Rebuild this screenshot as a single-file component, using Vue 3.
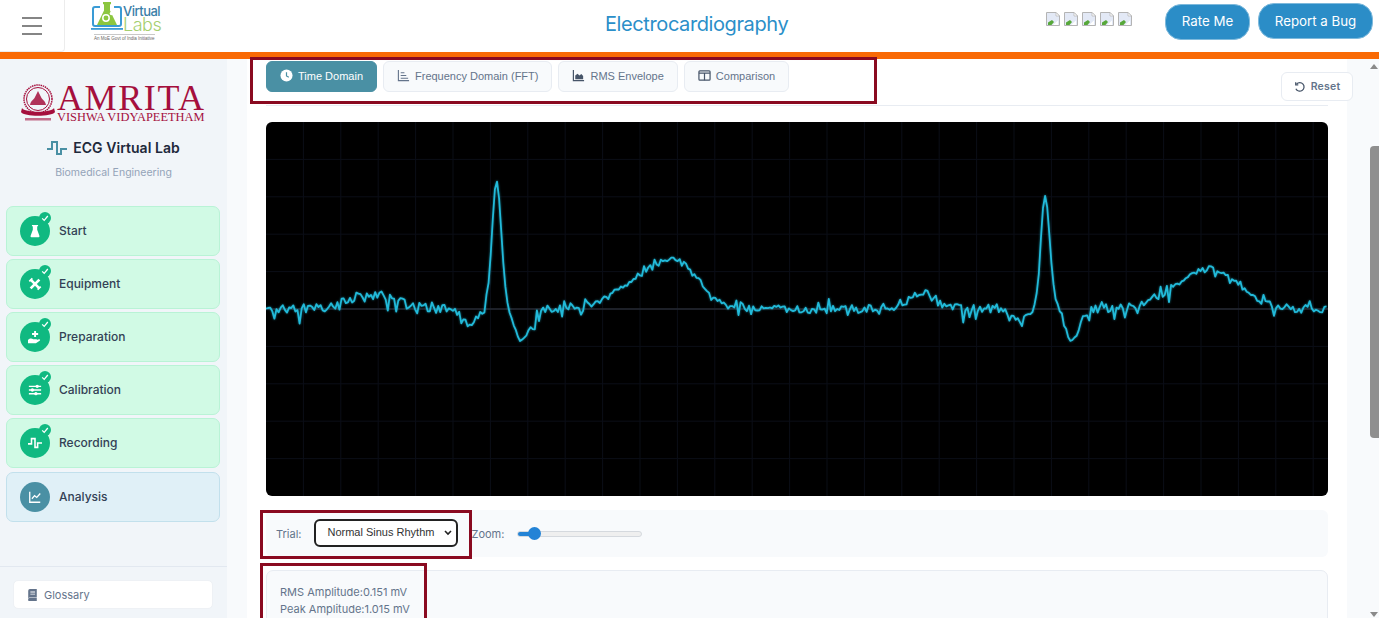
<script setup>
import { computed } from 'vue'

const steps = [
  { name: 'Start', icon: 'flask', done: true },
  { name: 'Equipment', icon: 'tools', done: true },
  { name: 'Preparation', icon: 'hand', done: true },
  { name: 'Calibration', icon: 'sliders', done: true },
  { name: 'Recording', icon: 'wave', done: true },
  { name: 'Analysis', icon: 'chart', done: false }
]
const tabs = [
  { name: 'Time Domain', icon: 'clock', active: true },
  { name: 'Frequency Domain (FFT)', icon: 'bars' },
  { name: 'RMS Envelope', icon: 'area' },
  { name: 'Comparison', icon: 'cols' }
]

const W = 1062
const H = 374
const MID = 187
const vGrid = Array.from({ length: 28 }, (_, i) => 37.4 * (i + 1))
const hGrid = Array.from({ length: 9 }, (_, i) => 37.4 * (i + 1))

function bump(x, c, a, wl, wr) {
  const w = x < c ? wl : (wr ?? wl)
  return a * Math.exp(-((x - c) ** 2) / (2 * w * w))
}
const trace = computed(() => {
  let seed = 20240611
  const rnd = () => {
    seed = (seed * 1664525 + 1013904223) % 4294967296
    return seed / 4294967296
  }
  const pts = []
  for (let px = 266; px <= 1328; px += 2.1) {
    let v = 0
    v += bump(px, 372, 15, 24)
    v += bump(px, 470, -15, 7)
    v += bump(px, 496.5, 128, 4.4, 4.8)
    v += bump(px, 521, -32, 6, 8)
    v += bump(px, 674, 50, 40, 24)
    v += bump(px, 922, 15, 16, 14)
    v += bump(px, 1020, -14, 9, 6)
    v += bump(px, 1045, 113, 4.2, 4.8)
    v += bump(px, 1071, -32, 5, 8)
    v += bump(px, 1212, 40, 36, 28)
    let n = (rnd() - 0.5) * 9
    if (rnd() < 0.24) n += (rnd() - 0.6) * 24
    const damp = bump(px, 496.5, 1, 8) + bump(px, 1045, 1, 8) + bump(px, 521, 0.75, 8) + bump(px, 1071, 0.75, 8)
    const calm = bump(px, 680, 0.6, 60) + bump(px, 1215, 0.4, 50)
    v += n * (1 - Math.min(1, damp)) * (1 - calm)
    pts.push(`${(px - 266).toFixed(1)},${(MID - v).toFixed(1)}`)
  }
  return pts.join(' ')
})
</script>

<template>
  <div class="page">
    <header class="top">
      <button class="menu" aria-label="Menu"><span></span><span></span><span></span></button>
      <div class="vl-logo">
        <svg class="vl-mark" viewBox="0 0 32 30" width="32" height="30">
          <path d="M9 6H4a2 2 0 0 0-2 2v15a2 2 0 0 0 2 2h24a2 2 0 0 0 2-2V8a2 2 0 0 0-2-2h-5" fill="none" stroke="#3a9bd5" stroke-width="2"/>
          <path d="M0 27h32v1.800H0z" fill="#3a9bd5"/>
          <path d="M12 1h8v2l-1 .5v6L26 24H6l7-14.500v-6L12 3z" fill="#8cc63f"/>
          <circle cx="15" cy="17" r="3.200" fill="none" stroke="#fff" stroke-width="1.500"/>
          <circle cx="20.500" cy="12.500" r="1.800" fill="#fff"/>
        </svg>
        <div class="vl-words"><span class="vl-a">Virtual</span><span class="vl-b">Labs</span></div>
        <div class="vl-tag">An MoE Govt of India Initiative</div>
      </div>
      <h1 class="title">Electrocardiography</h1>
      <div class="broken">
        <svg v-for="n in 5" :key="n" viewBox="0 0 14 14" width="14" height="14">
          <path d="M.5.5h9.500l3.500 3.500v9.500H.5z" fill="#e3e9f6" stroke="#b4b4b4"/>
          <path d="M2 13V10.500L6 8l2 2-2.500 3z" fill="#57a83a"/>
          <path d="M7 13l5-4.500V13z" fill="#fff"/>
          <path d="M10 .5l3.500 3.500H10z" fill="#fff" stroke="#b4b4b4" stroke-width=".7"/>
        </svg>
      </div>
      <button class="pill rate">Rate Me</button>
      <button class="pill bug">Report a Bug</button>
    </header>
    <div class="accent"></div>

    <div class="body">
      <aside class="side">
        <div class="brand">
          <div class="amrita">
            <svg class="emblem" viewBox="0 0 34 38" width="34" height="38">
              <circle cx="17" cy="15" r="14" fill="none" stroke="#a50f3d" stroke-width="1.500" stroke-dasharray="1.500 .7"/>
              <circle cx="17" cy="15" r="11.500" fill="none" stroke="#a50f3d" stroke-width="1"/>
              <path d="M9 21c1-5 4-5 5-8l3-6 3 6c1 3 4 3 5 8z" fill="#a50f3d" opacity=".85"/>
              <path d="M1 24c3 5 29 5 32 0l1 4c-3 5-31 5-34 0z" fill="#a50f3d"/>
              <rect x="4" y="34" width="26" height="2.500" fill="#a50f3d" opacity=".6"/>
            </svg>
            <div class="am-words">
              <div class="am-a">AMRITA</div>
              <div class="am-b">VISHWA VIDYAPEETHAM</div>
            </div>
          </div>
          <div class="lab">
            <svg viewBox="0 0 20 14" width="20" height="14" fill="none" stroke="#4a90a4" stroke-width="2">
              <path d="M0 8h5V1h5v12h4V8h6"/>
            </svg>
            <span>ECG Virtual Lab</span>
          </div>
          <div class="dept">Biomedical Engineering</div>
        </div>

        <nav class="steps">
          <div v-for="s in steps" :key="s.name" class="step" :class="{ done: s.done }">
            <div class="dot">
              <svg viewBox="0 0 16 16" width="14" height="14" fill="#fff" stroke="none">
                <path v-if="s.icon === 'flask'" d="M4.500 1h7v1.700h-1v3.800l2.500 7a1 1 0 0 1-1 1.500H4a1 1 0 0 1-1-1.500l2.500-7V2.700h-1z"/>
                <g v-if="s.icon === 'tools'" fill="none" stroke="#fff" stroke-width="3">
                  <path d="M3 13 13 3"/>
                  <path d="M3 3l10 10"/>
                  <path d="M1.500 5 5 1.500M11 14.500l3.500-3.500" stroke-width="2"/>
                </g>
                <g v-if="s.icon === 'hand'">
                  <path d="M7 1h2.200v2.400h2.400v2.200H9.200V8H7V5.600H4.600V3.400H7z"/>
                  <path d="M0 11.500c2-2 4-2 6-1h3.500c1.200 0 1.200 1.700 0 1.700H7l5.500-1.700c1.300-.3 1.900 1 .8 1.700L9 15H0z"/>
                </g>
                <g v-if="s.icon === 'sliders'">
                  <path d="M1 3h14v1.600H1zM1 7.200h14v1.600H1zM1 11.400h14V13H1z"/>
                  <circle cx="10.500" cy="3.800" r="1.900"/><circle cx="5" cy="8" r="1.900"/><circle cx="9" cy="12.200" r="1.900"/>
                </g>
                <path v-if="s.icon === 'wave'" d="M0 9h4V3h4v10h3V8h5" fill="none" stroke="#fff" stroke-width="1.800"/>
                <path v-if="s.icon === 'chart'" d="M2 2v12h12M4.500 10l3-3.500 2.500 2 4-4.500" fill="none" stroke="#fff" stroke-width="1.500"/>
              </svg>
              <span v-if="s.done" class="tick">
                <svg viewBox="0 0 10 10" width="8" height="8" fill="none" stroke="#fff" stroke-width="1.600"><path d="M1.500 5.500 4 8l4.500-5.500"/></svg>
              </span>
            </div>
            <span class="step-name">{{ s.name }}</span>
          </div>
        </nav>

        <div class="side-foot">
          <button class="gloss">
            <svg viewBox="0 0 12 14" width="11" height="12" fill="#64748b"><path d="M1 2a2 2 0 0 1 2-2h8v10H3a2 2 0 0 0-2 1zM1 12a1.500 1.500 0 0 1 1.500-1.500H11V14H2.500A1.500 1.500 0 0 1 1 12zM3.500 3v1H9V3zM3.500 5.500v1H9v-1z" fill-rule="evenodd"/></svg>
            Glossary
          </button>
        </div>
      </aside>

      <main class="main">
        <section class="panel">
          <div class="tabbar">
            <div class="tabs">
              <button v-for="t in tabs" :key="t.name" class="tab" :class="{ on: t.active }">
                <svg viewBox="0 0 14 14" width="13" height="13">
                  <g v-if="t.icon === 'clock'">
                    <circle cx="7" cy="7" r="6.500" fill="#fff"/>
                    <path d="M7 3.500V7.500L9.500 9" fill="none" stroke="#4a90a4" stroke-width="1.300"/>
                  </g>
                  <path v-if="t.icon === 'bars'" d="M1.500 1v11.500H13M4 4h4M4 7h6M4 10h8" fill="none" stroke="#64748b" stroke-width="1.200"/>
                  <g v-if="t.icon === 'area'">
                    <path d="M1.500 1v11.500H13" fill="none" stroke="#475569" stroke-width="1.300"/>
                    <path d="M3.500 11V7l2.500-2 2 2 2-1.500 2 2V11z" fill="#475569"/>
                  </g>
                  <g v-if="t.icon === 'cols'">
                    <rect x="1" y="2" width="12" height="10" rx="1" fill="none" stroke="#475569" stroke-width="1.300"/>
                    <path d="M1 4.500h12M7 4v8" stroke="#475569" stroke-width="1.300"/>
                  </g>
                </svg>
                {{ t.name }}
              </button>
            </div>
            <button class="reset">
              <svg viewBox="0 0 14 14" width="12" height="12" fill="none" stroke="#475569" stroke-width="1.500">
                <path d="M3 3.500A5 5 0 1 1 2.200 9"/><path d="M2 1.500v3h3" />
              </svg>
              Reset
            </button>
          </div>

          <div class="scope">
            <svg :viewBox="`0 0 ${W} ${H}`" :width="W" :height="H">
              <line v-for="x in vGrid" :key="'v' + x" :x1="x" :x2="x" y1="0" :y2="H" class="grid"/>
              <line v-for="y in hGrid" :key="'h' + y" x1="0" :x2="W" :y1="y" :y2="y" class="grid"/>
              <line x1="0" :x2="W" :y1="MID" :y2="MID" class="base"/>
              <polyline :points="trace" class="sig"/>
            </svg>
          </div>

          <div class="controls">
            <label class="ctl-label">Trial:</label>
            <select class="trial">
              <option>Normal Sinus Rhythm</option>
            </select>
            <label class="ctl-label">Zoom:</label>
            <input class="zoom" type="range" min="1" max="8" step="0.1" value="1.6" />
          </div>

          <div class="stats">
            <div>RMS Amplitude:0.151 mV</div>
            <div>Peak Amplitude:1.015 mV</div>
          </div>
        </section>

        <div class="scrollbar">
          <i class="up"></i>
          <div class="thumb"></div>
          <i class="down"></i>
        </div>
      </main>
    </div>

    <div class="mark m1"></div>
    <div class="mark m2"></div>
    <div class="mark m3"></div>
  </div>
</template>

<style>
html, body { margin: 0; overflow: hidden; background: #fff; }
</style>

<style scoped>
.page { position: relative; width: 1379px; height: 618px; overflow: hidden; font-family: Inter, "Liberation Sans", sans-serif; background: #fff; }
button { font-family: inherit; cursor: pointer; }

.top { height: 52px; display: flex; align-items: flex-start; background: #fff; }
.menu { width: 65px; height: 52px; padding: 0 22px; border: 0; border-right: 1px solid #ececec; border-bottom: 1px solid #ececec; border-radius: 0 0 4px 0; background: #fff; display: flex; flex-direction: column; justify-content: center; gap: 6px; }
.menu span { display: block; width: 20px; height: 2px; background: #858585; }

.vl-logo { position: relative; width: 70px; height: 42px; margin: 1px 0 0 26px; }
.vl-mark { display: block; }
.vl-words { position: absolute; left: 32px; top: 4px; height: 28px; display: flex; flex-direction: column; }
.vl-a { font-size: 13px; line-height: 12px; font-weight: 500; color: #3a7ea8; letter-spacing: -.5px; }
.vl-b { font-size: 18px; font-weight: 300; color: #a5cf70; line-height: 16px; letter-spacing: -.5px; }
.vl-tag { position: absolute; left: 3px; top: 33px; padding-top: 1px; border-top: 1px solid #c8c8c8; font: 4.500px/6px "Liberation Sans", sans-serif; color: #666; white-space: nowrap; }

.title { margin: 13px 0 0 444px; font-size: 20px; line-height: 22px; font-weight: 400; color: #2b8fc9; white-space: nowrap; letter-spacing: -.4px; }
.broken { display: flex; gap: 4px; margin: 12px 33px 0 auto; }
.pill { height: 36px; padding: 0 0 2px; color: #fff; background: #2b8dc7; border: 1px solid #7db9dc; border-radius: 16px; font-size: 13.300px; }
.rate { width: 85px; margin-top: 4px; }
.bug { width: 115px; margin: 3px 6px 0 8px; padding: 0; }

.accent { height: 7px; background: #f96a05; }

.body { display: flex; height: 559px; }
.side { width: 227px; flex: none; background: #f1f5f9; display: flex; flex-direction: column; }
.brand { height: 147px; box-sizing: border-box; padding-top: 26px; }
.amrita { display: flex; padding-left: 21px; gap: 2px; }
.emblem { margin-top: -1px; }
.am-words { width: 150px; }
.am-a { font: 36px/26px "Liberation Serif", serif; color: #a50f3d; letter-spacing: 1.600px; height: 26px; }
.am-b { font: 12.400px/12px "Liberation Serif", serif; color: #a50f3d; white-space: nowrap; }
.lab { display: flex; align-items: center; justify-content: center; gap: 6px; margin-top: 15px; font-size: 14px; line-height: 20px; font-weight: 600; color: #1e293b; letter-spacing: .05px; }
.dept { text-align: center; margin-top: 8px; font-size: 10.500px; line-height: 14px; color: #94a3b8; }

.steps { display: flex; flex-direction: column; gap: 3px; padding: 0 7px 0 6px; }
.step { height: 50px; box-sizing: border-box; display: flex; align-items: center; padding-left: 13px; gap: 9px; border: 1px solid #bfe9d8; border-radius: 7px; background: #e0f0f7; border-color: #c2e0ec; }
.step.done { background: #d1fae5; border-color: #b9f3d6; }
.dot { position: relative; width: 30px; height: 30px; border-radius: 50%; background: #4a90a4; display: flex; align-items: center; justify-content: center; }
.done .dot { background: #10b981; }
.tick { position: absolute; right: -1px; top: -4px; width: 12px; height: 12px; border-radius: 50%; background: #10b981; display: flex; align-items: center; justify-content: center; }
.step-name { font-size: 12px; line-height: 16px; font-weight: 500; color: #334155; }
.step:last-child { margin-top: 1px; }

.side-foot { margin-top: auto; height: 52px; box-sizing: border-box; border-top: 1px solid #e2e8f0; padding: 13px 14px 0 13px; }
.gloss { width: 100%; height: 29px; display: flex; align-items: center; gap: 6px; padding: 0 0 0 13px; background: #fff; border: 1px solid #eef1f5; border-radius: 5px; font-size: 11px; color: #64748b; }

.main { flex: 1; display: flex; background: #f8fafc; padding-left: 20px; min-width: 0; }
.panel { width: 1100px; flex: none; box-sizing: border-box; background: #fff; padding: 2px 19px 0; }
.tabbar { display: flex; justify-content: space-between; height: 44px; border-bottom: 1px solid #e8ecf2; box-sizing: content-box; }
.tabs { display: flex; gap: 6px; align-items: flex-start; }
.tab { height: 31px; padding: 0 13px 2px; display: flex; align-items: center; gap: 5px; border: 1px solid #e8ecf2; border-radius: 6px; background: #f8fafc; color: #64748b; font: 11px "Liberation Sans", sans-serif; white-space: nowrap; }
.tab.on { background: #4a90a4; border-color: #4a90a4; color: #fff; }
.reset { margin: 11px -25px 0 0; width: 72px; height: 29px; display: flex; align-items: center; justify-content: center; gap: 5px; padding: 0; background: #fff; border: 1px solid #e8ecf2; border-radius: 6px; color: #64748b; font-size: 10.500px; font-weight: 600; letter-spacing: .2px; }

.scope { margin-top: 16px; width: 1062px; height: 374px; background: #000; border-radius: 6px; overflow: hidden; }
.scope svg { display: block; }
.grid { stroke: #0b0e17; stroke-width: 1; }
.base { stroke: #262a33; stroke-width: 1.500; }
.sig { fill: none; stroke: #22bad9; stroke-width: 1.800; stroke-linejoin: round; filter: drop-shadow(0 0 1px rgba(34, 186, 217, .6)); }

.controls { margin-top: 14px; height: 47px; display: flex; align-items: center; padding-left: 10px; background: #f8fafc; border-radius: 6px; }
.ctl-label { font-size: 11px; color: #64748b; }
.trial { width: 144px; height: 28px; margin: 0 13px 2px; padding: 0 0 1px 11px; border: 2px solid #222; border-radius: 6px; color: #333; font: 11px "Liberation Sans", sans-serif; -webkit-appearance: none; appearance: none; background: #fff url("data:image/svg+xml,%3Csvg xmlns='http://www.w3.org/2000/svg' width='8' height='6'%3E%3Cpath d='M1 1l3 3 3-3' fill='none' stroke='%23222' stroke-width='1.600'/%3E%3C/svg%3E") no-repeat right 4px center; }
.zoom { -webkit-appearance: none; appearance: none; width: 125px; height: 6px; margin: 0 0 0 13px; border: 1px solid #d5d9de; border-radius: 4px; box-sizing: border-box; background: linear-gradient(90deg, #2383d6 0 17px, #efefef 17px); }
.zoom::-webkit-slider-thumb { -webkit-appearance: none; width: 13px; height: 13px; border-radius: 50%; background: #2383d6; border: 0; }

.stats { margin-top: 13px; height: 100px; box-sizing: border-box; padding: 13px 13px 0; border: 1px solid #e8ecf2; border-radius: 7px; background: #f8fafc; font-size: 11px; line-height: 17px; color: #64748b; }

.scrollbar { position: relative; flex: 1; display: flex; flex-direction: column; align-items: flex-end; }
.thumb { width: 9px; height: 292px; margin-top: 87px; background: #8f8f8f; border-radius: 4px 0 0 4px; }
.up, .down { position: absolute; right: 1px; width: 0; height: 0; border-left: 4px solid transparent; border-right: 4px solid transparent; }
.up { top: 5px; border-bottom: 5px solid #8a8a8a; }
.down { bottom: 1px; border-top: 5px solid #8a8a8a; }

.mark { position: absolute; box-sizing: border-box; border: 3px solid #8a0a20; pointer-events: none; }
.m1 { left: 250px; top: 57px; width: 627px; height: 47px; }
.m2 { left: 260px; top: 510px; width: 212px; height: 49px; }
.m3 { left: 260px; top: 563px; width: 167px; height: 70px; }
</style>
